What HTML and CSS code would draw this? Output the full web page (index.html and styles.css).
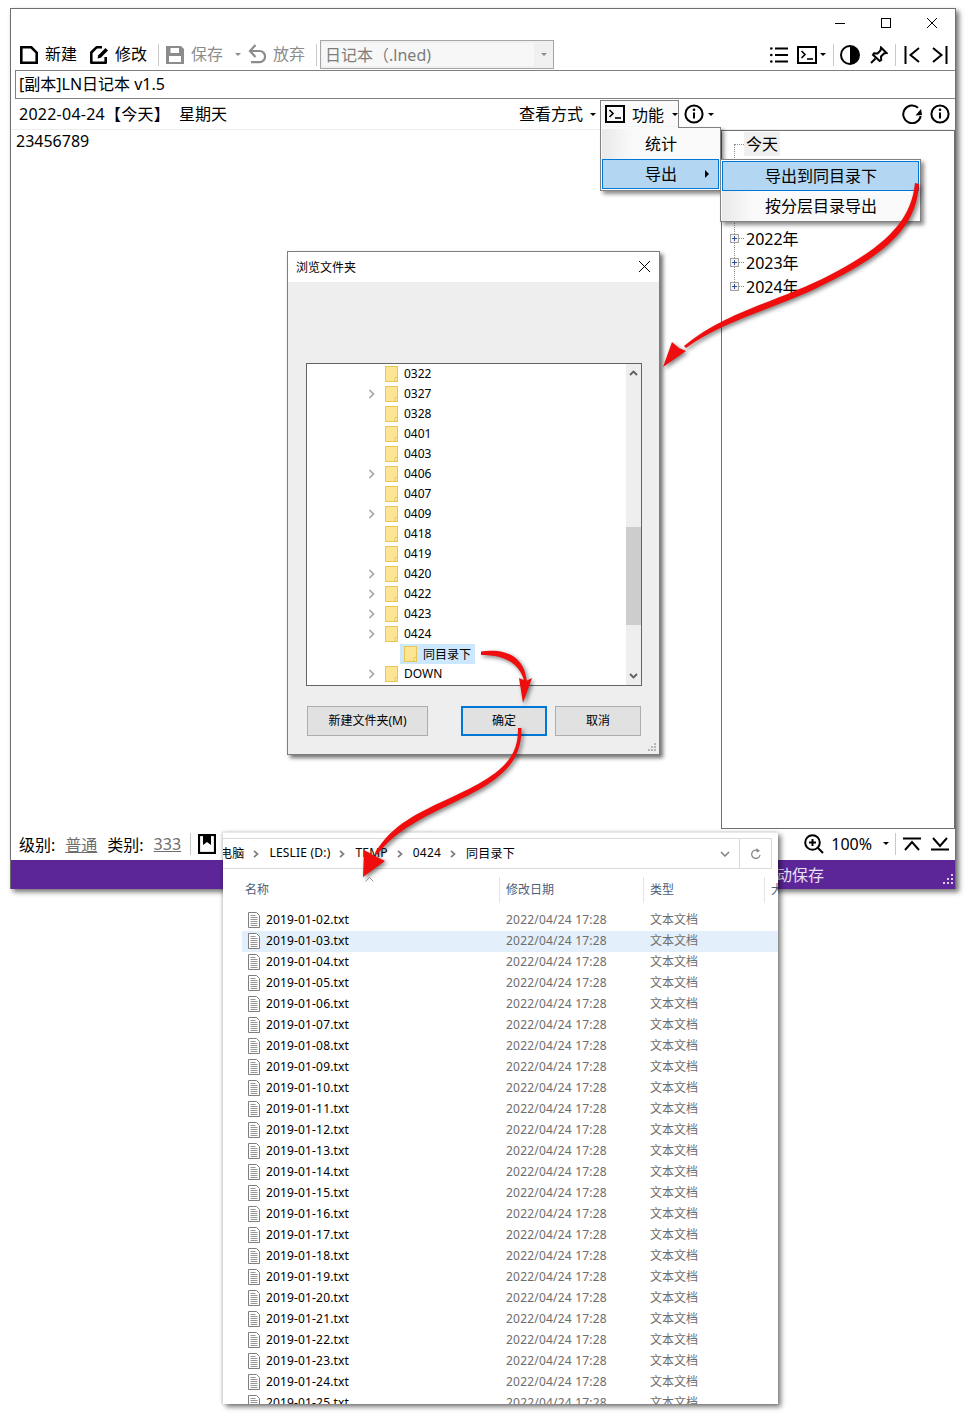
FILE: index.html
```html
<!DOCTYPE html>
<html lang="zh-CN">
<head>
    <meta charset="UTF-8">
    <title>LN日记本</title>
    <link rel="stylesheet" href="styles.css">
</head>
<body>
<svg class="icon-defs" width="0" height="0">
    <symbol id="i-term" viewBox="0 0 20 18"><rect x="1" y="1" width="18" height="16" fill="none" stroke="#000" stroke-width="2"/><path d="M4.500 5l3.500 3.500-3.500 3.500" fill="none" stroke="#000" stroke-width="1.600"/><path d="M10 13h6" stroke="#000" stroke-width="1.600"/></symbol>
    <symbol id="i-info" viewBox="0 0 20 20"><circle cx="10" cy="10" r="8.600" fill="none" stroke="#000" stroke-width="2"/><path d="M10 8.500v6" stroke="#000" stroke-width="2"/><circle cx="10" cy="5.800" r="1.300"/></symbol>
    <symbol id="i-folder" viewBox="0 0 13 16"><rect x=".5" y=".5" width="12" height="15" fill="#fde594" stroke="#e9c552"/><path d="M10 15.500v-4h2.500" fill="#fff0b8" stroke="#e9c552"/></symbol>
    <symbol id="i-chevron" viewBox="0 0 8 10"><path d="M1.500 1l4 4-4 4" fill="none" stroke="#a6a6a6" stroke-width="1.700"/></symbol>
    <symbol id="i-crumb" viewBox="0 0 6 8"><path d="M1 .8L4.500 4 1 7.200" fill="none" stroke="#808080" stroke-width="1.800"/></symbol>
    <symbol id="i-txt" viewBox="0 0 12 16"><path d="M.5.5h8l3 3v12h-11z" fill="#fff" stroke="#7f7f7f"/><path d="M2.500 3.500h5M2.500 5.500h7M2.500 7.500h7M2.500 9.500h7M2.500 11.500h7M2.500 13.500h7" stroke="#969696"/></symbol>
    <symbol id="i-plus" viewBox="0 0 9 9"><rect x=".5" y=".5" width="8" height="8" fill="#f4f4f4" stroke="#a0a0a0"/><path d="M2 4.500h5M4.500 2v5" stroke="#2f4f8f"/></symbol>
</svg>

<div class="canvas">
    <div class="app-window">
        <div class="win-controls">
            <svg class="win-btn" viewBox="0 0 10 10"><path d="M0 5.500h10" stroke="#000"/></svg>
            <svg class="win-btn" viewBox="0 0 10 10"><rect x=".5" y=".5" width="9" height="9" fill="none" stroke="#000"/></svg>
            <svg class="win-btn" viewBox="0 0 10 10"><path d="M0 0l10 10M10 0L0 10" stroke="#000"/></svg>
        </div>

        <div class="toolbar">
            <svg class="tool-icon" viewBox="0 0 18 18"><path d="M1.300 1.300h10l5.400 5.400v10H1.300z" fill="none" stroke="#000" stroke-width="2.600"/></svg>
            <span class="tool-label">新建</span>
            <svg class="tool-icon tool-gap" viewBox="0 0 18 18"><path d="M12 1.300H6.500L1.300 6.500v10.200h14.400V11" fill="none" stroke="#000" stroke-width="2.600" stroke-linejoin="round"/><path d="M7.500 12.500l.8-3.300L15.500 2l2.500 2.500-7.200 7.200z"/></svg>
            <span class="tool-label">修改</span>
            <span class="tool-sep"></span>
            <svg class="tool-icon" viewBox="0 0 18 18"><path d="M0 0h15l3 3v15H0z" fill="#8c8c8c"/><rect x="4.500" y="2" width="8.500" height="5" fill="#fff"/><rect x="3" y="10" width="12" height="6" fill="#fff"/></svg>
            <span class="tool-label is-off">保存</span>
            <span class="caret caret-off caret-save"></span>
            <svg class="undo-icon" viewBox="0 0 18 20"><path d="M2 7h9.500a5.600 5.600 0 0 1 0 11.200H3" fill="none" stroke="#8c8c8c" stroke-width="2.200"/><path d="M7.500 1L2 7l5.500 6" fill="none" stroke="#8c8c8c" stroke-width="2.200"/></svg>
            <span class="tool-label is-off">放弃</span>
            <span class="tool-sep tool-sep-combo"></span>
            <div class="combo">
                <span class="combo-text">日记本（.lned)</span>
                <span class="combo-arrow"><span class="caret caret-off"></span></span>
            </div>
            <div class="tool-right">
                <svg class="tool-icon" viewBox="0 0 18 18"><path d="M5 2.500h13M5 9h13M5 15.500h13" stroke="#000" stroke-width="2"/><circle cx="1.300" cy="2.500" r="1.300"/><circle cx="1.300" cy="9" r="1.300"/><circle cx="1.300" cy="15.500" r="1.300"/></svg>
                <svg class="term-icon term-tool"><use href="#i-term"/></svg>
                <span class="caret caret-term"></span>
                <span class="tool-sep tool-sep-a"></span>
                <svg class="round-icon" viewBox="0 0 20 20"><circle cx="10" cy="10" r="9" fill="none" stroke="#000" stroke-width="2"/><path d="M10 1a9 9 0 0 1 0 18z"/></svg>
                <svg class="tool-icon pin-icon" viewBox="0 0 18 18"><path d="M11 1.500l5.500 5.500-2.500.5-3 3 .2 3.500-1.500 1L3 8.800l1-1.500 3.500.2 3-3z" fill="none" stroke="#000" stroke-width="2"/><path d="M5.500 12.500L1 17" stroke="#000" stroke-width="2"/></svg>
                <span class="tool-sep tool-sep-b"></span>
                <svg class="nav-icon" viewBox="0 0 16 18"><path d="M1.500 0v18M15 2L6.500 9l8.500 7" fill="none" stroke="#000" stroke-width="2"/></svg>
                <svg class="nav-icon nav-next" viewBox="0 0 16 18"><path d="M14.500 0v18M1 2l8.500 7L1 16" fill="none" stroke="#000" stroke-width="2"/></svg>
            </div>
        </div>

        <div class="path-box">[副本]LN日记本 v1.5</div>

        <div class="date-row">
            <span class="date-text">2022-04-24【今天】</span>
            <span class="date-week">星期天</span>
            <span class="view-label">查看方式</span>
            <span class="caret caret-view"></span>
            <div class="func-tab">
                <svg class="term-icon"><use href="#i-term"/></svg>
                <span class="func-label">功能</span>
                <span class="caret"></span>
            </div>
            <svg class="info-icon info-main"><use href="#i-info"/></svg>
            <span class="caret caret-info"></span>
            <svg class="refresh-icon" viewBox="0 0 20 20"><path d="M16 3.800A8.800 8.800 0 1 0 18.700 12" fill="none" stroke="#000" stroke-width="2"/><path d="M13.500 11.500L20 11l-1 -6z"/></svg>
            <svg class="info-icon info-end"><use href="#i-info"/></svg>
        </div>

        <div class="work-area">
            <div class="editor">23456789</div>
            <div class="tree-panel">
                <div class="tree-today"><span class="tree-dots"></span><span class="today-label">今天</span></div>
                <div class="tree-year tree-first"><svg class="plus-icon"><use href="#i-plus"/></svg><span class="tree-dots-short"></span>2022年</div>
                <div class="tree-year"><svg class="plus-icon"><use href="#i-plus"/></svg><span class="tree-dots-short"></span>2023年</div>
                <div class="tree-year"><svg class="plus-icon"><use href="#i-plus"/></svg><span class="tree-dots-short"></span>2024年</div>
            </div>
        </div>

        <div class="status-row">
            <span>级别:</span><a class="status-link">普通</a>
            <span class="status-gap">类别:</span><a class="status-link">333</a>
            <span class="tool-sep tool-sep-status"></span>
            <svg class="book-icon" viewBox="0 0 18 20"><rect x="1" y="1" width="16" height="18" fill="none" stroke="#000" stroke-width="2.200"/><path d="M5 1h8v10l-4-3-4 3z"/></svg>
            <div class="status-right">
                <svg class="zoom-icon" viewBox="0 0 20 20"><circle cx="8.500" cy="8.500" r="7.300" fill="none" stroke="#000" stroke-width="2"/><path d="M8.500 5v7M5 8.500h7M13.500 13.500L19 19" stroke="#000" stroke-width="2"/></svg>
                <span class="zoom-text">100%</span>
                <span class="caret caret-zoom"></span>
                <span class="tool-sep tool-sep-zoom"></span>
                <svg class="fold-icon" viewBox="0 0 18 14"><path d="M0 1.500h18M2 13l7-8 7 8" fill="none" stroke="#000" stroke-width="2"/></svg>
                <svg class="fold-icon fold-down" viewBox="0 0 18 14"><path d="M0 12.500h18M2 1l7 8 7-8" fill="none" stroke="#000" stroke-width="2"/></svg>
            </div>
        </div>

        <div class="purple-bar">
            <span class="purple-text">自动保存</span>
            <svg class="grip" viewBox="0 0 12 12" fill="#d9d0e8"><rect x="9" y="1" width="2" height="2"/><rect x="5" y="5" width="2" height="2"/><rect x="9" y="5" width="2" height="2"/><rect x="1" y="9" width="2" height="2"/><rect x="5" y="9" width="2" height="2"/><rect x="9" y="9" width="2" height="2"/></svg>
        </div>
    </div>

    <!-- 功能 dropdown -->
    <div class="menu menu-func">
        <div class="menu-item"><span class="menu-gutter"></span><span class="menu-text">统计</span></div>
        <div class="menu-item is-active"><span class="menu-gutter"></span><span class="menu-text">导出</span><span class="menu-arrow"></span></div>
    </div>
    <div class="menu menu-export">
        <div class="menu-item is-active"><span class="menu-gutter"></span><span class="menu-text">导出到同目录下</span></div>
        <div class="menu-item"><span class="menu-gutter"></span><span class="menu-text">按分层目录导出</span></div>
    </div>

    <!-- 浏览文件夹 -->
    <div class="dialog">
        <div class="dialog-title">
            <span>浏览文件夹</span>
            <svg class="dialog-close" viewBox="0 0 11 11"><path d="M0 0l11 11M11 0L0 11" stroke="#000"/></svg>
        </div>
        <div class="dialog-body">
            <div class="folder-box">
                <div class="folder-list">
                    <div class="folder-row"><svg class="folder-icon"><use href="#i-folder"/></svg>0322</div>
                    <div class="folder-row has-kids"><svg class="chevron"><use href="#i-chevron"/></svg><svg class="folder-icon"><use href="#i-folder"/></svg>0327</div>
                    <div class="folder-row"><svg class="folder-icon"><use href="#i-folder"/></svg>0328</div>
                    <div class="folder-row"><svg class="folder-icon"><use href="#i-folder"/></svg>0401</div>
                    <div class="folder-row"><svg class="folder-icon"><use href="#i-folder"/></svg>0403</div>
                    <div class="folder-row has-kids"><svg class="chevron"><use href="#i-chevron"/></svg><svg class="folder-icon"><use href="#i-folder"/></svg>0406</div>
                    <div class="folder-row"><svg class="folder-icon"><use href="#i-folder"/></svg>0407</div>
                    <div class="folder-row has-kids"><svg class="chevron"><use href="#i-chevron"/></svg><svg class="folder-icon"><use href="#i-folder"/></svg>0409</div>
                    <div class="folder-row"><svg class="folder-icon"><use href="#i-folder"/></svg>0418</div>
                    <div class="folder-row"><svg class="folder-icon"><use href="#i-folder"/></svg>0419</div>
                    <div class="folder-row has-kids"><svg class="chevron"><use href="#i-chevron"/></svg><svg class="folder-icon"><use href="#i-folder"/></svg>0420</div>
                    <div class="folder-row has-kids"><svg class="chevron"><use href="#i-chevron"/></svg><svg class="folder-icon"><use href="#i-folder"/></svg>0422</div>
                    <div class="folder-row has-kids"><svg class="chevron"><use href="#i-chevron"/></svg><svg class="folder-icon"><use href="#i-folder"/></svg>0423</div>
                    <div class="folder-row has-kids"><svg class="chevron"><use href="#i-chevron"/></svg><svg class="folder-icon"><use href="#i-folder"/></svg>0424</div>
                    <div class="folder-row folder-child"><span class="folder-selected"><svg class="folder-icon"><use href="#i-folder"/></svg>同目录下</span></div>
                    <div class="folder-row has-kids"><svg class="chevron"><use href="#i-chevron"/></svg><svg class="folder-icon"><use href="#i-folder"/></svg>DOWN</div>
                </div>
                <div class="scrollbar">
                    <svg class="scroll-arrow" viewBox="0 0 9 6"><path d="M1 5l3.500-3.500L8 5" fill="none" stroke="#606060" stroke-width="1.800"/></svg>
                    <div class="scroll-track"><div class="scroll-thumb"></div></div>
                    <svg class="scroll-arrow" viewBox="0 0 9 6"><path d="M1 1l3.500 3.500L8 1" fill="none" stroke="#606060" stroke-width="1.800"/></svg>
                </div>
            </div>
            <div class="dialog-actions">
                <button class="btn btn-new">新建文件夹(M)</button>
                <button class="btn btn-ok">确定</button>
                <button class="btn btn-cancel">取消</button>
            </div>
            <svg class="dialog-grip" viewBox="0 0 10 10" fill="#b5b5b5"><rect x="7" y="1" width="2" height="2"/><rect x="4" y="4" width="2" height="2"/><rect x="7" y="4" width="2" height="2"/><rect x="1" y="7" width="2" height="2"/><rect x="4" y="7" width="2" height="2"/><rect x="7" y="7" width="2" height="2"/></svg>
        </div>
    </div>

    <!-- 资源管理器 -->
    <div class="explorer">
        <div class="crumb-bar">
            <div class="crumbs">
                <span class="crumb">电脑</span><svg class="crumb-sep"><use href="#i-crumb"/></svg>
                <span class="crumb">LESLIE (D:)</span><svg class="crumb-sep"><use href="#i-crumb"/></svg>
                <span class="crumb">TEMP</span><svg class="crumb-sep"><use href="#i-crumb"/></svg>
                <span class="crumb">0424</span><svg class="crumb-sep"><use href="#i-crumb"/></svg>
                <span class="crumb">同目录下</span>
            </div>
            <svg class="crumb-drop" viewBox="0 0 10 6"><path d="M1 1l4 4 4-4" fill="none" stroke="#808080" stroke-width="1.500"/></svg>
            <div class="crumb-refresh">
                <svg viewBox="0 0 12 12" width="12" height="12"><path d="M10 7a4.200 4.200 0 1 1-1.500-4" fill="none" stroke="#8a8a8a" stroke-width="1.300"/><path d="M6.500 0l3.500 3-3.500 1.500z" fill="#8a8a8a"/></svg>
            </div>
        </div>
        <div class="file-head">
            <span class="col-name">名称<svg class="sort-mark" viewBox="0 0 9 5"><path d="M.5 4.500l4-4 4 4" fill="none" stroke="#9a9a9a"/></svg></span>
            <span class="col-date">修改日期</span>
            <span class="col-type">类型</span>
            <span class="col-size">大小</span>
        </div>
        <div class="file-list">
            <div class="file-row"><svg class="file-icon"><use href="#i-txt"/></svg><span class="file-name">2019-01-02.txt</span><span class="file-date">2022/04/24 17:28</span><span class="file-type">文本文档</span></div>
            <div class="file-row is-hover"><svg class="file-icon"><use href="#i-txt"/></svg><span class="file-name">2019-01-03.txt</span><span class="file-date">2022/04/24 17:28</span><span class="file-type">文本文档</span></div>
            <div class="file-row"><svg class="file-icon"><use href="#i-txt"/></svg><span class="file-name">2019-01-04.txt</span><span class="file-date">2022/04/24 17:28</span><span class="file-type">文本文档</span></div>
            <div class="file-row"><svg class="file-icon"><use href="#i-txt"/></svg><span class="file-name">2019-01-05.txt</span><span class="file-date">2022/04/24 17:28</span><span class="file-type">文本文档</span></div>
            <div class="file-row"><svg class="file-icon"><use href="#i-txt"/></svg><span class="file-name">2019-01-06.txt</span><span class="file-date">2022/04/24 17:28</span><span class="file-type">文本文档</span></div>
            <div class="file-row"><svg class="file-icon"><use href="#i-txt"/></svg><span class="file-name">2019-01-07.txt</span><span class="file-date">2022/04/24 17:28</span><span class="file-type">文本文档</span></div>
            <div class="file-row"><svg class="file-icon"><use href="#i-txt"/></svg><span class="file-name">2019-01-08.txt</span><span class="file-date">2022/04/24 17:28</span><span class="file-type">文本文档</span></div>
            <div class="file-row"><svg class="file-icon"><use href="#i-txt"/></svg><span class="file-name">2019-01-09.txt</span><span class="file-date">2022/04/24 17:28</span><span class="file-type">文本文档</span></div>
            <div class="file-row"><svg class="file-icon"><use href="#i-txt"/></svg><span class="file-name">2019-01-10.txt</span><span class="file-date">2022/04/24 17:28</span><span class="file-type">文本文档</span></div>
            <div class="file-row"><svg class="file-icon"><use href="#i-txt"/></svg><span class="file-name">2019-01-11.txt</span><span class="file-date">2022/04/24 17:28</span><span class="file-type">文本文档</span></div>
            <div class="file-row"><svg class="file-icon"><use href="#i-txt"/></svg><span class="file-name">2019-01-12.txt</span><span class="file-date">2022/04/24 17:28</span><span class="file-type">文本文档</span></div>
            <div class="file-row"><svg class="file-icon"><use href="#i-txt"/></svg><span class="file-name">2019-01-13.txt</span><span class="file-date">2022/04/24 17:28</span><span class="file-type">文本文档</span></div>
            <div class="file-row"><svg class="file-icon"><use href="#i-txt"/></svg><span class="file-name">2019-01-14.txt</span><span class="file-date">2022/04/24 17:28</span><span class="file-type">文本文档</span></div>
            <div class="file-row"><svg class="file-icon"><use href="#i-txt"/></svg><span class="file-name">2019-01-15.txt</span><span class="file-date">2022/04/24 17:28</span><span class="file-type">文本文档</span></div>
            <div class="file-row"><svg class="file-icon"><use href="#i-txt"/></svg><span class="file-name">2019-01-16.txt</span><span class="file-date">2022/04/24 17:28</span><span class="file-type">文本文档</span></div>
            <div class="file-row"><svg class="file-icon"><use href="#i-txt"/></svg><span class="file-name">2019-01-17.txt</span><span class="file-date">2022/04/24 17:28</span><span class="file-type">文本文档</span></div>
            <div class="file-row"><svg class="file-icon"><use href="#i-txt"/></svg><span class="file-name">2019-01-18.txt</span><span class="file-date">2022/04/24 17:28</span><span class="file-type">文本文档</span></div>
            <div class="file-row"><svg class="file-icon"><use href="#i-txt"/></svg><span class="file-name">2019-01-19.txt</span><span class="file-date">2022/04/24 17:28</span><span class="file-type">文本文档</span></div>
            <div class="file-row"><svg class="file-icon"><use href="#i-txt"/></svg><span class="file-name">2019-01-20.txt</span><span class="file-date">2022/04/24 17:28</span><span class="file-type">文本文档</span></div>
            <div class="file-row"><svg class="file-icon"><use href="#i-txt"/></svg><span class="file-name">2019-01-21.txt</span><span class="file-date">2022/04/24 17:28</span><span class="file-type">文本文档</span></div>
            <div class="file-row"><svg class="file-icon"><use href="#i-txt"/></svg><span class="file-name">2019-01-22.txt</span><span class="file-date">2022/04/24 17:28</span><span class="file-type">文本文档</span></div>
            <div class="file-row"><svg class="file-icon"><use href="#i-txt"/></svg><span class="file-name">2019-01-23.txt</span><span class="file-date">2022/04/24 17:28</span><span class="file-type">文本文档</span></div>
            <div class="file-row"><svg class="file-icon"><use href="#i-txt"/></svg><span class="file-name">2019-01-24.txt</span><span class="file-date">2022/04/24 17:28</span><span class="file-type">文本文档</span></div>
            <div class="file-row"><svg class="file-icon"><use href="#i-txt"/></svg><span class="file-name">2019-01-25.txt</span><span class="file-date">2022/04/24 17:28</span><span class="file-type">文本文档</span></div>
        </div>
    </div>

    <!-- red callout arrows -->
    <svg class="arrows" viewBox="0 0 969 1416" fill="#f00d0d">
        <path d="M915 183 C911 224 880 250 822 279 C772 303 722 314 684 346 L686 348 C726 319 776 309 825 284 C884 255 917 228 919 184 Z"/>
        <path d="M663 367 L672 342 L679 348 L686 351 Z"/>
        <path d="M481 651.500 C500 649 524 652 527 682 L524.500 682 C519 660 500 655 481 655 Z"/>
        <path d="M523 703 L519 678 L526 681 L532 678 Z"/>
        <path d="M518 728 C519 760 498 776 452 797 C418 813 392 824 375 853 L377 855 C396 830 424 817 457 801 C502 780 522 762 521.500 728 Z"/>
        <path d="M363 877 L364 850 L373 855 L385 861 Z"/>
    </svg>
</div>
</body>
</html>
```

FILE: styles.css
```css
* {
    box-sizing: border-box;
}
body {
    margin: 0;
    background-color: #fff;
    color: #000;
    font-family: "Noto Sans", "Noto Sans CJK SC", sans-serif;
    font-size: 16px;
}
svg {
    display: block;
    flex: none;
}
.icon-defs {
    position: absolute;
}
.canvas {
    position: relative;
    width: 969px;
    height: 1416px;
    overflow: hidden;
}

/* main window */
.app-window {
    position: absolute;
    left: 10px;
    top: 8px;
    width: 946px;
    height: 881px;
    display: flex;
    flex-direction: column;
    background-color: #fff;
    border: 1px solid #6f6f6f;
    border-bottom: none;
    box-shadow: 3px 3px 5px rgba(0, 0, 0, 0.55);
}
.win-controls {
    height: 30px;
    display: flex;
    justify-content: flex-end;
    align-items: center;
    gap: 36px;
    padding: 0 18px 2px 0;
}
.win-btn {
    width: 10px;
    height: 10px;
}
.toolbar {
    height: 31px;
    display: flex;
    align-items: center;
    padding-left: 9px;
}
.tool-icon {
    width: 18px;
    height: 18px;
}
.undo-icon {
    width: 18px;
    height: 20px;
    margin: -1px 0 0 7px;
}
.tool-gap {
    margin-left: 13px;
}
.tool-label {
    margin-left: 7px;
    padding-bottom: 2px;
    line-height: 22px;
}
.tool-label.is-off {
    color: #8c8c8c;
}
.tool-sep {
    width: 1px;
    height: 22px;
    background-color: #c8c8c8;
    margin: 0 7px 0 11px;
}
.tool-sep-combo {
    margin: 0 3px 0 11px;
}
.caret {
    width: 0;
    height: 0;
    flex: none;
    border-left: 3px solid transparent;
    border-right: 3px solid transparent;
    border-top: 3px solid #000;
}
.caret-off {
    border-top-color: #8c8c8c;
}
.caret-save {
    margin-left: 12px;
}
.combo {
    width: 234px;
    height: 29px;
    display: flex;
    background-color: #f0f0f0;
    border: 1px solid #a6a6a6;
}
.combo-text {
    flex: 1;
    margin: 2px 0 2px 1px;
    padding-left: 3px;
    line-height: 24px;
    background-color: #f7f7f7;
    color: #7d7d7d;
    white-space: nowrap;
}
.combo-arrow {
    width: 19px;
    display: flex;
    align-items: center;
    justify-content: center;
}
.tool-right {
    margin-left: auto;
    display: flex;
    align-items: center;
    padding-right: 7px;
}
.term-icon {
    width: 20px;
    height: 18px;
}
.term-tool {
    margin-left: 9px;
}
.caret-term {
    margin-left: 3px;
}
.tool-sep-a {
    margin: 0 6px 0 7px;
}
.round-icon {
    width: 20px;
    height: 20px;
}
.pin-icon {
    margin-left: 10px;
}
.tool-sep-b {
    margin: 0 8px 0 7px;
}
.nav-icon {
    width: 16px;
    height: 18px;
}
.nav-next {
    margin-left: 12px;
}
.path-box {
    height: 29px;
    margin-left: 4px;
    padding-left: 3px;
    line-height: 26px;
    border: 1px solid #808080;
    border-right: none;
    white-space: nowrap;
}
.date-row {
    height: 31px;
    display: flex;
    align-items: center;
    padding-left: 8px;
    border-bottom: 1px solid #eee;
}
.date-text {
    padding-bottom: 2px;
    white-space: nowrap;
    letter-spacing: 0.25px;
}
.date-week {
    margin-left: 9px;
    padding-bottom: 2px;
}
.view-label {
    margin-left: auto;
    padding-bottom: 2px;
}
.caret-view {
    margin-left: 7px;
}
.func-tab {
    width: 79px;
    height: 29px;
    margin-left: 4px;
    align-self: flex-end;
    display: flex;
    align-items: center;
    padding: 0 0 2px 4px;
    background-color: #fafafa;
    border: 1px solid #808080;
    border-bottom: none;
}
.func-label {
    margin: 0 8px 0 7px;
}
.info-icon {
    width: 20px;
    height: 20px;
}
.info-main {
    margin-left: 5px;
}
.caret-info {
    margin-left: 4px;
}
.refresh-icon {
    width: 20px;
    height: 20px;
    margin-left: 188px;
}
.info-end {
    margin: 0 5px 0 8px;
}

/* editor and tree */
.work-area {
    flex: 1;
    display: flex;
    min-height: 0;
}
.editor {
    flex: 1;
    padding-left: 5px;
    line-height: 22px;
}
.tree-panel {
    width: 234px;
    padding-left: 12px;
    border: 1px solid #6f6f6f;
    position: relative;
}
.tree-panel::before {
    content: "";
    position: absolute;
    left: 12px;
    top: 14px;
    height: 143px;
    border-left: 1px dotted #8c8c8c;
}
.tree-today {
    height: 24px;
    display: flex;
    align-items: center;
    margin-top: 1px;
}
.tree-dots {
    width: 10px;
    border-top: 1px dotted #8c8c8c;
}
.today-label {
    padding: 0 2px;
    background-color: #f0f0f0;
    line-height: 24px;
}
.tree-year {
    height: 24px;
    display: flex;
    align-items: center;
    position: relative;
    margin-left: -4px;
}
.tree-first {
    margin-top: 70px;
}
.plus-icon {
    width: 9px;
    height: 9px;
}
.tree-dots-short {
    width: 5px;
    margin-right: 2px;
    border-top: 1px dotted #8c8c8c;
}

/* status and purple bar */
.status-row {
    height: 31px;
    display: flex;
    align-items: center;
    padding: 0 0 2px 8px;
}
.status-link {
    margin-left: 10px;
    color: #6e6e6e;
    text-decoration: underline;
}
.status-gap {
    margin-left: 10px;
}
.tool-sep-status {
    margin: 0 7px 0 9px;
}
.book-icon {
    width: 18px;
    height: 20px;
}
.status-right {
    margin-left: auto;
    display: flex;
    align-items: center;
    padding-right: 6px;
}
.zoom-icon {
    width: 20px;
    height: 20px;
}
.zoom-text {
    margin-left: 7px;
}
.caret-zoom {
    margin-left: 11px;
}
.tool-sep-zoom {
    margin: 0 7px 0 6px;
}
.fold-icon {
    width: 18px;
    height: 14px;
}
.fold-down {
    margin-left: 10px;
}
.purple-bar {
    height: 29px;
    display: flex;
    align-items: center;
    justify-content: flex-end;
    color: #e8e0f2;
    background-color: #5c2699;
}
.purple-text {
    padding-bottom: 2px;
}
.grip {
    width: 12px;
    height: 12px;
    margin: 9px 1px 0 118px;
}

/* popup menus */
.menu {
    position: absolute;
    background-color: #fafafa;
    border: 1px solid #808080;
    box-shadow: 3px 3px 4px rgba(0, 0, 0, 0.45);
}
.menu-func {
    left: 600px;
    top: 127px;
    width: 121px;
    height: 64px;
    padding-top: 1px;
}
.menu-func::before {
    content: "";
    position: absolute;
    left: 0;
    top: -1px;
    width: 77px;
    height: 1px;
    background-color: #fafafa;
}
.menu-export {
    left: 720px;
    top: 159px;
    width: 201px;
    height: 63px;
    padding-top: 1px;
}
.menu-item {
    height: 30px;
    display: flex;
    align-items: center;
    margin: 0 1px;
}
.menu-gutter {
    width: 31px;
    align-self: stretch;
    background: linear-gradient(to right, #e9e9e9, #fafafa);
}
.menu-text {
    margin-left: 12px;
    padding-bottom: 2px;
}
.menu-item.is-active {
    background-color: #b3d7f3;
    border: 1px solid #0078d7;
}
.menu-item.is-active .menu-gutter {
    width: 30px;
    background: none;
}
.menu-arrow {
    margin-left: auto;
    margin-right: 9px;
    border-left: 4px solid #000;
    border-top: 4px solid transparent;
    border-bottom: 4px solid transparent;
}

/* browse folder dialog */
.dialog {
    position: absolute;
    left: 287px;
    top: 251px;
    width: 373px;
    height: 504px;
    display: flex;
    flex-direction: column;
    border: 1px solid #7d7d7d;
    box-shadow: 3px 3px 4px rgba(0, 0, 0, 0.55);
}
.dialog-title {
    height: 30px;
    flex: none;
    display: flex;
    align-items: center;
    justify-content: space-between;
    padding: 0 9px 1px 8px;
    background-color: #fff;
    font-size: 12px;
}
.dialog-close {
    width: 11px;
    height: 11px;
}
.dialog-body {
    flex: 1;
    position: relative;
    padding: 81px 17px 0 18px;
    background-color: #eee;
}
.folder-box {
    height: 323px;
    display: flex;
    background-color: #fff;
    border: 1px solid #646464;
}
.folder-list {
    flex: 1;
}
.folder-row {
    height: 20px;
    display: flex;
    align-items: center;
    padding: 0 0 1px 78px;
    font-size: 12px;
}
.folder-row.has-kids {
    padding-left: 61px;
}
.chevron {
    width: 8px;
    height: 10px;
    margin-right: 9px;
}
.folder-icon {
    width: 13px;
    height: 16px;
    margin-right: 6px;
}
.folder-child {
    padding: 0 0 0 93px;
}
.folder-selected {
    height: 20px;
    display: flex;
    align-items: center;
    padding: 0 4px 1px;
    background-color: #cce8ff;
}
.scrollbar {
    width: 15px;
    display: flex;
    flex-direction: column;
    background-color: #eee;
}
.scroll-arrow {
    width: 9px;
    height: 6px;
    margin: 6px 3px;
}
.scroll-track {
    flex: 1;
    padding-top: 145px;
}
.scroll-thumb {
    height: 98px;
    background-color: #cdcdcd;
}
.dialog-actions {
    display: flex;
    margin-top: 20px;
    padding: 0 1px;
}
.btn {
    height: 30px;
    padding: 0 0 2px;
    font-family: inherit;
    font-size: 12px;
    color: #000;
    background-color: #e1e1e1;
    border: 1px solid #adadad;
}
.btn-new {
    width: 121px;
}
.btn-ok {
    width: 86px;
    margin-left: 33px;
    border: 2px solid #0078d7;
}
.btn-cancel {
    width: 86px;
    margin-left: 8px;
}
.dialog-grip {
    position: absolute;
    right: 2px;
    bottom: 2px;
    width: 10px;
    height: 10px;
}

/* explorer window */
.explorer {
    position: absolute;
    left: 223px;
    top: 832px;
    width: 555px;
    height: 572px;
    display: flex;
    flex-direction: column;
    overflow: hidden;
    background-color: #fff;
    border-top: 1px solid #e8e8e8;
    box-shadow: 3px 3px 5px rgba(0, 0, 0, 0.5), -1px 0 3px rgba(0, 0, 0, 0.2);
}
.crumb-bar {
    height: 31px;
    flex: none;
    margin: 5px 6px 0 -4px;
    display: flex;
    align-items: center;
    border: 1px solid #d9d9d9;
    font-size: 12px;
}
.crumbs {
    flex: 1;
    display: flex;
    align-items: center;
    padding: 0 0 2px 0;
}
.crumb {
    letter-spacing: 0.2px;
}
.crumb-sep {
    width: 6px;
    height: 8px;
    margin: 2px 10px 0 9px;
}
.crumb-drop {
    width: 10px;
    height: 6px;
    margin-right: 9px;
}
.crumb-refresh {
    width: 32px;
    align-self: stretch;
    display: flex;
    align-items: center;
    justify-content: center;
    border-left: 1px solid #d9d9d9;
}
.file-head {
    height: 26px;
    flex: none;
    margin-top: 8px;
    display: flex;
    font-size: 12px;
    color: #4c607a;
}
.file-head span {
    flex: none;
    height: 100%;
    display: flex;
    align-items: center;
    border-right: 1px solid #e5e5e5;
    padding: 0 0 2px 6px;
    position: relative;
    white-space: nowrap;
}
.file-head .col-name {
    width: 277px;
    padding-left: 22px;
}
.file-head .col-date {
    width: 144px;
}
.file-head .col-type {
    width: 121px;
}
.file-head .col-size {
    width: 40px;
    border-right: none;
}
.sort-mark {
    position: absolute;
    left: 142px;
    top: 0;
    width: 9px;
    height: 5px;
}
.file-list {
    flex: 1;
    margin-top: 7px;
    padding-left: 19px;
    overflow: hidden;
}
.file-row {
    height: 21px;
    display: flex;
    align-items: center;
    padding-bottom: 2px;
    font-size: 12px;
    color: #6d6d6d;
}
.file-row.is-hover {
    background-color: #e3f0fb;
}
.file-icon {
    width: 12px;
    height: 16px;
    margin: 0 6px 0 6px;
}
.file-name {
    width: 240px;
    color: #000;
    letter-spacing: 0.15px;
}
.file-date {
    width: 144px;
    letter-spacing: 0.2px;
}
.file-type {
    margin-top: -1px;
}
.arrows {
    position: absolute;
    left: 0;
    top: 0;
    width: 969px;
    height: 1416px;
    pointer-events: none;
    filter: drop-shadow(2px 2px 2px rgba(0, 0, 0, 0.5));
}
```
